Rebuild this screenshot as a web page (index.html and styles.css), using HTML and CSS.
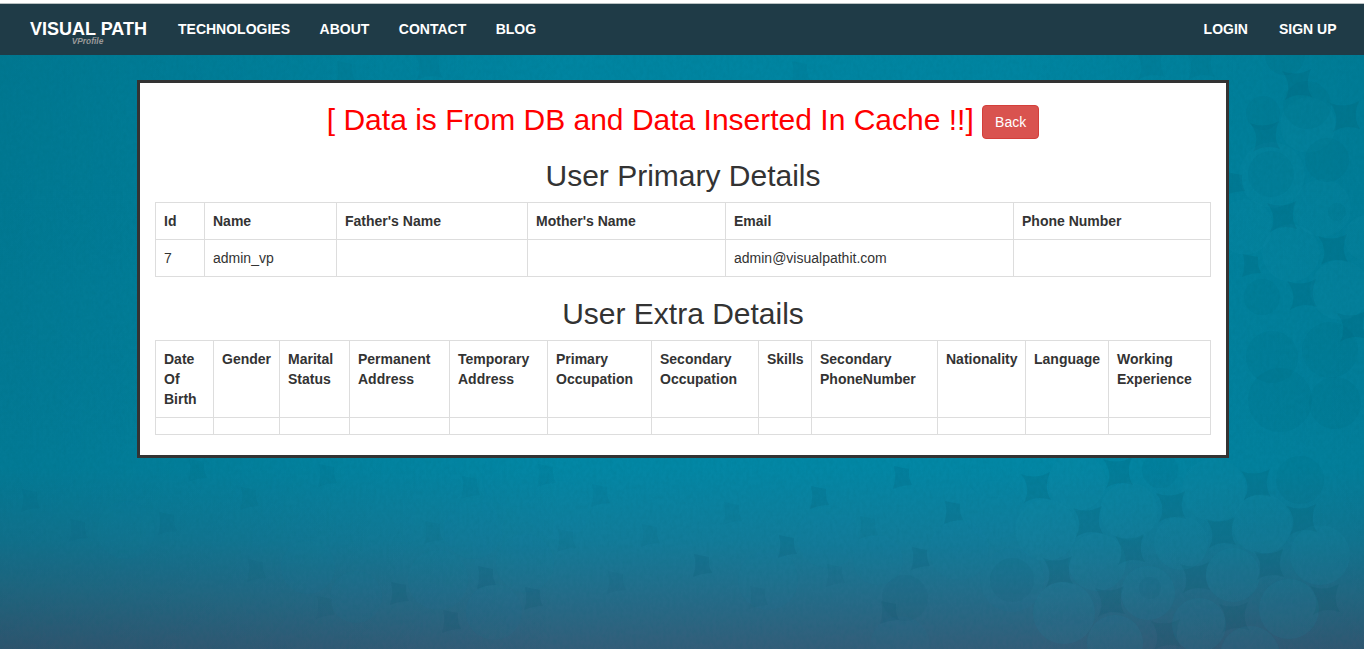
FILE: index.html
```
<!DOCTYPE html>
<html lang="en">
<head>
<meta charset="utf-8">
<title>VProfile</title>
<link rel="stylesheet" href="styles.css">
</head>
<body>
<svg class="backdrop" viewBox="0 0 1364 649" preserveAspectRatio="none" aria-hidden="true">
  <defs>
    <linearGradient id="sea" x1="0" y1="0" x2="0" y2="1">
      <stop offset="0" stop-color="#0084a0"/><stop offset=".72" stop-color="#0387a5"/>
      <stop offset=".83" stop-color="#127c9a"/><stop offset=".91" stop-color="#236e8b"/><stop offset="1" stop-color="#345d79"/>
    </linearGradient>
    <linearGradient id="edge"><stop offset="0" stop-opacity=".1"/><stop offset=".42" stop-opacity="0"/><stop offset=".75" stop-opacity="0"/><stop offset="1" stop-opacity=".07"/></linearGradient>
    <filter id="grain" x="0" y="0" width="100%" height="100%">
      <feTurbulence type="fractalNoise" baseFrequency=".3 .2" numOctaves="3" seed="4"/>
      <feColorMatrix values="0 0 0 0 0  0 0 0 0 .12  0 0 0 0 .16  .5 0 0 0 -.18"/>
    </filter>
    <path id="star" d="M-15-14Q0-8 14-16Q7 0 15 12Q0 7-12 15Q-4 0-15-14Z"/>
    <path id="chip" d="M-8-11Q0-9 7-8Q6 1 10 8Q0 8-9 12Q-5 0-8-11Z"/>
  </defs>
  <rect width="1364" height="649" fill="url(#sea)"/>
  <rect width="1364" height="649" fill="url(#edge)"/>
  <g class="shade shade-star">
    <use href="#star" x="1036" y="488"/><use href="#star" x="1088" y="522"/><use href="#star" x="1118" y="473"/>
    <use href="#star" x="1256" y="485"/><use href="#star" x="1221" y="533"/><use href="#star" x="1269" y="565"/>
    <use href="#star" x="1171" y="507"/><use href="#star" x="1234" y="618"/><use href="#star" x="1058" y="572"/>
    <use href="#star" x="1130" y="550"/><use href="#star" x="1195" y="578"/><use href="#star" x="1110" y="602"/>
    <use href="#star" x="1302" y="520"/><use href="#star" x="1325" y="600"/><use href="#star" x="1166" y="635"/>
    <use href="#star" x="1297" y="85"/><use href="#star" x="1345" y="117"/><use href="#star" x="1265" y="137"/>
    <use href="#star" x="1282" y="217"/><use href="#star" x="1333" y="250"/><use href="#chip" x="1251" y="265"/>
    <use href="#star" x="1302" y="295"/><use href="#star" x="1352" y="327"/><use href="#chip" x="1235" y="183"/>
  </g>
  <g class="discs">
    <circle cx="1077" cy="482" r="29"/><circle cx="1129" cy="511" r="29"/><circle cx="1181" cy="543" r="27"/>
    <circle cx="1046" cy="530" r="31"/><circle cx="1097" cy="562" r="29"/><circle cx="1214" cy="490" r="32"/>
    <circle cx="1262" cy="524" r="30"/><circle cx="1233" cy="575" r="27"/><circle cx="1148" cy="593" r="27"/>
    <circle cx="1199" cy="625" r="27"/><circle cx="1115" cy="643" r="28"/><circle cx="1289" cy="609" r="30"/>
    <circle cx="1064" cy="613" r="31"/><circle cx="1322" cy="208" r="29"/><circle cx="1272" cy="175" r="33"/>
    <circle cx="1291" cy="253" r="29"/><circle cx="1340" cy="290" r="30"/><circle cx="1308" cy="125" r="28"/>
    <circle cx="1245" cy="227" r="28"/><circle cx="1367" cy="238" r="23"/><circle cx="1250" cy="656" r="30"/>
    <circle cx="1320" cy="555" r="30"/>
  </g>
  <g class="discs discs-faint">
    <circle cx="959" cy="550" r="30"/><circle cx="828" cy="537" r="31"/><circle cx="994" cy="510" r="30"/>
    <circle cx="878" cy="560" r="25"/><circle cx="494" cy="612" r="28"/><circle cx="994" cy="468" r="30"/>
    <circle cx="473" cy="530" r="29"/><circle cx="525" cy="563" r="29"/><circle cx="559" cy="510" r="30"/>
    <circle cx="438" cy="580" r="30"/><circle cx="356" cy="597" r="26"/><circle cx="308" cy="567" r="27"/>
    <circle cx="126" cy="530" r="29"/><circle cx="512" cy="477" r="30"/><circle cx="768" cy="580" r="30"/>
    <circle cx="900" cy="646" r="30"/><circle cx="1012" cy="580" r="32"/>
  </g>
  <g class="shade">
    <circle cx="1271" cy="174" r="23"/><circle cx="1327" cy="160" r="22"/><circle cx="1272" cy="357" r="26"/>
    <circle cx="1330" cy="350" r="28"/><circle cx="1262" cy="297" r="18"/><circle cx="1335" cy="403" r="26"/>
    <circle cx="1263" cy="113" r="17"/><circle cx="1280" cy="400" r="32"/><circle cx="1307" cy="105" r="24"/>
    <circle cx="1337" cy="212" r="9"/><circle cx="1150" cy="588" r="11"/><circle cx="1285" cy="55" r="20"/>
    <circle cx="1012" cy="580" r="22"/><circle cx="905" cy="598" r="23"/><circle cx="1300" cy="480" r="24"/>
    <circle cx="1160" cy="470" r="18"/>
  </g>
  <g class="shade shade-chip">
    <use href="#chip" x="819" y="497"/><use href="#chip" x="787" y="546"/><use href="#chip" x="902" y="477"/>
    <use href="#chip" x="953" y="512"/><use href="#chip" x="702" y="565"/><use href="#chip" x="889" y="612"/>
    <use href="#chip" x="920" y="558"/><use href="#chip" x="486" y="577"/><use href="#chip" x="533" y="598"/>
    <use href="#chip" x="451" y="621"/><use href="#chip" x="399" y="593"/>
  </g>
  <g class="shade">
    <use href="#chip" x="835" y="575"/><use href="#chip" x="868" y="527"/><use href="#chip" x="650" y="535"/>
    <use href="#chip" x="197" y="470"/><use href="#chip" x="249" y="498"/><use href="#chip" x="167" y="523"/>
    <use href="#chip" x="327" y="475"/><use href="#chip" x="546" y="475"/><use href="#chip" x="600" y="495"/>
    <use href="#chip" x="433" y="532"/><use href="#chip" x="325" y="607"/><use href="#chip" x="78" y="530"/>
    <use href="#chip" x="616" y="582"/><use href="#chip" x="566" y="540"/><use href="#chip" x="30" y="500"/>
    <use href="#chip" x="256" y="570"/><use href="#chip" x="732" y="513"/><use href="#chip" x="758" y="597"/>
    <use href="#chip" x="470" y="487"/><use href="#chip" x="345" y="72"/><use href="#star" x="428" y="66"/>
    <use href="#chip" x="800" y="72"/><use href="#star" x="1150" y="65"/><use href="#star" x="1200" y="65"/>
  </g>
  <rect width="1364" height="649" filter="url(#grain)" opacity=".4"/>
</svg>

<nav class="navbar">
  <a class="brand">VISUAL PATH<span class="brand-sub">VProfile</span></a>
  <ul class="menu">
    <li>TECHNOLOGIES</li><li>ABOUT</li><li>CONTACT</li><li>BLOG</li>
  </ul>
  <ul class="menu menu-right"><li>LOGIN</li><li>SIGN UP</li></ul>
</nav>

<main class="panel">
  <h2 class="notice">[ Data is From DB and Data Inserted In Cache !!] <a class="btn">Back</a></h2>
  <h2>User Primary Details</h2>
  <table class="table primary">
    <colgroup><col class="w49"><col class="w132"><col class="w191"><col class="w198"><col class="w288"><col></colgroup>
    <tr><th>Id</th><th>Name</th><th>Father's Name</th><th>Mother's Name</th><th>Email</th><th>Phone Number</th></tr>
    <tr><td>7</td><td>admin_vp</td><td></td><td></td><td>admin@visualpathit.com</td><td></td></tr>
  </table>
  <h2>User Extra Details</h2>
  <table class="table extra">
    <colgroup><col class="w58"><col class="w66"><col class="w70"><col class="w100"><col class="w98"><col class="w104"><col class="w107"><col class="w53"><col class="w126"><col class="w88"><col class="w83"><col></colgroup>
    <tr><th>Date Of Birth</th><th>Gender</th><th>Marital Status</th><th>Permanent Address</th><th>Temporary Address</th><th>Primary Occupation</th><th>Secondary Occupation</th><th>Skills</th><th>Secondary PhoneNumber</th><th>Nationality</th><th>Language</th><th>Working Experience</th></tr>
    <tr><td></td><td></td><td></td><td></td><td></td><td></td><td></td><td></td><td></td><td></td><td></td><td></td></tr>
  </table>
</main>
</body>
</html>
```
FILE: styles.css
```
* { box-sizing: border-box; }
html { background: #0084a0; }
body {
  margin: 0;
  min-height: 649px;
  overflow: hidden;
  font: 14px/20px "Liberation Sans", Arial, sans-serif;
  color: #333;
}
.backdrop { position: absolute; inset: 0; width: 100%; height: 649px; z-index: -1; }
.discs { fill: #1c93b0; fill-opacity: .1; }
.discs-faint { fill-opacity: .05; }
.shade { fill: #004a60; fill-opacity: .055; }
.shade-star { fill-opacity: .13; }
.shade-chip { fill-opacity: .12; }

.navbar {
  display: flex;
  height: 55px;
  padding: 0 27.5px 0 30px;
  border-top: 3px solid #fff;
  background: #1f3b47;
  box-shadow: inset 0 1px #b9c1c2;
  color: #fff;
  font-weight: bold;
}
.brand { display: flex; flex-direction: column; align-items: center; width: 117px; padding-top: 16px; font-size: 18px; line-height: 20px; white-space: nowrap; }
.brand-sub { margin: -2px 0 0 -2px; font-size: 8.4px; line-height: 8px; font-style: italic; color: #999; }
.menu { display: flex; gap: 29.5px; margin: 0 0 0 31px; padding: 16px 0 0; list-style: none; }
.menu-right { gap: 31px; margin-left: auto; }

.panel { width: 1092px; margin: 25px 0 0 137px; padding: 0 15px; border: 3px solid #333; background: #fff; display: flow-root; }
h2 { margin: 20px 0 10px; font-size: 30px; line-height: 33px; font-weight: 400; text-align: center; }
.notice { color: #f00; }
.btn {
  display: inline-block;
  padding: 6px 12px;
  border: 1px solid #d43f3a;
  border-radius: 4px;
  background: #d9534f;
  color: #fff;
  font-size: 14px;
  line-height: 20px;
  vertical-align: middle;
}
.table { width: 1056px; margin: 0 0 20px; table-layout: fixed; border-collapse: collapse; }
.table th, .table td { padding: 8px; border: 1px solid #ddd; text-align: left; vertical-align: top; }
.w49 { width: 49px; } .w132 { width: 132px; } .w191 { width: 191px; } .w198 { width: 198px; } .w288 { width: 288px; }
.w58 { width: 58px; } .w66 { width: 66px; } .w70 { width: 70px; } .w100 { width: 100px; } .w98 { width: 98px; }
.w104 { width: 104px; } .w107 { width: 107px; } .w53 { width: 53px; } .w126 { width: 126px; } .w88 { width: 88px; } .w83 { width: 83px; }
```
